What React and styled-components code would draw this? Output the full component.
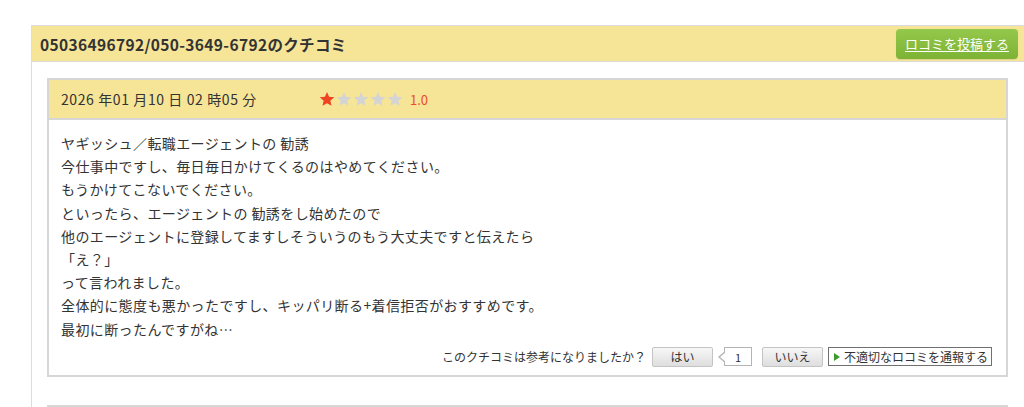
import React from "react";
import styled, { createGlobalStyle } from "styled-components";

const Global = createGlobalStyle`
  html, body { margin: 0; padding: 0; background: #fff; overflow: hidden; }
  body { font-family: "Noto Sans CJK JP", "Noto Sans", sans-serif; color: #333; }
`;

const Page = styled.div`
  padding: 25px 0 0 31px;
  width: 1030px;
  height: 407px;
  box-sizing: border-box;
`;

const Section = styled.section`
  border: 1px solid #dcdcdc;
  border-right: none;
  width: 1000px;
  height: 400px;
  background: #fff;
`;

const SectionHeader = styled.div`
  display: flex;
  align-items: center;
  justify-content: space-between;
  height: 35px;
  padding: 0 0 0 8px;
  background: #f6e497;
  border-bottom: 1px solid #dcdcdc;
`;

const Title = styled.h2`
  margin: 0;
  font-size: 15.5px;
  font-weight: bold;
  color: #333;
  letter-spacing: 0.35px;
`;

const PostButton = styled.a`
  display: flex;
  align-items: center;
  justify-content: center;
  width: 122px;
  height: 30px;
  margin-right: 14px;
  border-radius: 4px;
  background: linear-gradient(#94c84c, #7db334);
  color: #fff;
  font-size: 13px;
  text-decoration: underline;
  text-underline-offset: 2px;
  box-shadow: 0 1px 1px rgba(0,0,0,0.08);
`;

const SectionBody = styled.div`
  display: flex;
  flex-direction: column;
  gap: 28px;
  padding: 16px 0 0 15px;
`;

const Card = styled.article`
  width: 961px;
  box-sizing: border-box;
  border: 2px solid #d6d6d6;
  background: #fff;
  min-height: ${(p) => (p.$stub ? "20px" : "auto")};
`;

const CardHeader = styled.div`
  display: flex;
  align-items: center;
  height: 38px;
  padding-left: 12px;
  background: #f6e497;
  border-bottom: 2px solid #d6d6d6;
  font-size: 14px;
  color: #333;
`;

const DateText = styled.span`
  width: 258px;
  letter-spacing: 0.6px;
`;

const Stars = styled.span`
  display: flex;
  align-items: center;
  gap: 1px;
`;

const Score = styled.span`
  margin-left: 7px;
  color: #ec4a2a;
  font-size: 13px;
`;

const CardBody = styled.div`
  padding: 12px 12px 0 12px;
  font-size: 14px;
  line-height: 23.2px;
  letter-spacing: 0.4px;
  color: #333;
`;

const Line = styled.div`
  white-space: nowrap;
`;

const Footer = styled.div`
  display: flex;
  align-items: center;
  justify-content: flex-end;
  gap: 5px;
  padding: 6px 14px 8px 0;
  font-size: 12px;
  color: #333;
`;

const Question = styled.span`
  margin-right: 1px;
`;

const VoteButton = styled.button`
  width: 61px;
  height: 20px;
  padding: 0;
  border: 1px solid #c4c4c4;
  border-radius: 2px;
  background: linear-gradient(#f7f7f7, #dedede);
  font-family: inherit;
  font-size: 12px;
  color: #333;
  margin-left: ${(p) => p.$ml || 0}px;
`;

const Count = styled.span`
  position: relative;
  display: flex;
  align-items: center;
  justify-content: center;
  width: 26px;
  height: 17px;
  margin-left: 6px;
  border: 1px solid #b4b4b4;
  background: #fff;
  font-size: 11px;

  &::before,
  &::after {
    content: "";
    position: absolute;
    top: 50%;
    transform: translateY(-50%);
    border-style: solid;
    border-color: transparent;
  }
  &::before {
    left: -7px;
    border-width: 6px 7px 6px 0;
    border-right-color: #b4b4b4;
  }
  &::after {
    left: -5px;
    border-width: 5px 6px 5px 0;
    border-right-color: #fff;
  }
`;

const ReportButton = styled.a`
  display: flex;
  align-items: center;
  gap: 4px;
  height: 19px;
  width: 164px;
  box-sizing: border-box;
  padding-left: 5px;
  border: 1px solid #707070;
  background: #fff;
  color: #333;
  font-size: 12px;
`;

const Arrow = styled.span`
  width: 0;
  height: 0;
  border-style: solid;
  border-width: 4px 0 4px 6px;
  border-color: transparent transparent transparent #3d9a2c;
`;

const Star = ({ fill }) => (
  <svg width="16" height="16" viewBox="0 0 24 24">
    <path
      d="M12 1.5l3.1 7.2 7.8.7-5.9 5.2 1.8 7.7L12 18.3l-6.8 4 1.8-7.7-5.9-5.2 7.8-.7z"
      fill={fill}
    />
  </svg>
);

const lines = [
  "ヤギッシュ／転職エージェントの 勧誘",
  "今仕事中ですし、毎日毎日かけてくるのはやめてください。",
  "もうかけてこないでください。",
  "といったら、エージェントの 勧誘をし始めたので",
  "他のエージェントに登録してますしそういうのもう大丈夫ですと伝えたら",
  "「え？」",
  "って言われました。",
  "全体的に態度も悪かったですし、キッパリ断る+着信拒否がおすすめです。",
  "最初に断ったんですがね…",
];

export default function App() {
  return (
    <>
      <Global />
      <Page>
        <Section>
          <SectionHeader>
            <Title>05036496792/050-3649-6792のクチコミ</Title>
            <PostButton>ロコミを投稿する</PostButton>
          </SectionHeader>
          <SectionBody>
            <Card>
              <CardHeader>
                <DateText>2026 年01 月10 日 02 時05 分</DateText>
                <Stars>
                  <Star fill="#ee4422" />
                  <Star fill="#d4d4d4" />
                  <Star fill="#d4d4d4" />
                  <Star fill="#d4d4d4" />
                  <Star fill="#d4d4d4" />
                </Stars>
                <Score>1.0</Score>
              </CardHeader>
              <CardBody>
                {lines.map((l, i) => (
                  <Line key={i}>{l}</Line>
                ))}
              </CardBody>
              <Footer>
                <Question>このクチコミは参考になりましたか？</Question>
                <VoteButton>はい</VoteButton>
                <Count>1</Count>
                <VoteButton $ml={5}>いいえ</VoteButton>
                <ReportButton>
                  <Arrow />
                  不適切なロコミを通報する
                </ReportButton>
              </Footer>
            </Card>
            <Card $stub />
          </SectionBody>
        </Section>
      </Page>
    </>
  );
}
